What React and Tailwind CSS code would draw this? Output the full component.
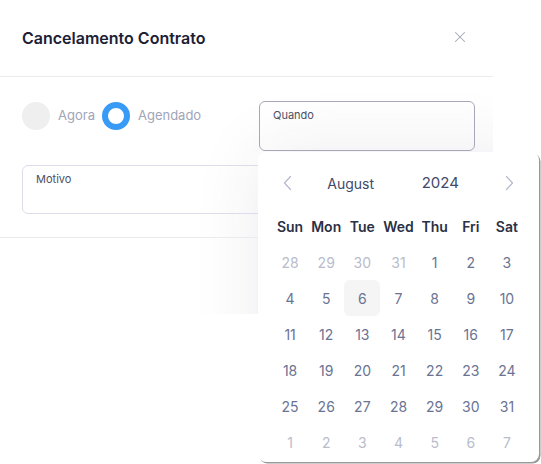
import { X } from 'lucide-react'

const WEEKDAYS = ['Sun', 'Mon', 'Tue', 'Wed', 'Thu', 'Fri', 'Sat']

// August 2024 grid, with the trailing/leading days of July and September
const DAYS = [
  [28, 29, 30, 31].map((d) => ({ d, out: true })),
  ...Array.from({ length: 31 }, (_, i) => ({ d: i + 1, out: false })),
  [1, 2, 3, 4, 5, 6, 7].map((d) => ({ d, out: true })),
].flat()

function Chevron({ dir }) {
  return (
    <svg width="9" height="16" viewBox="0 0 9 16" fill="none">
      <path
        d={dir === 'left' ? 'M7.5 1.5 1.5 8l6 6.5' : 'M1.5 1.5 7.5 8l-6 6.5'}
        stroke="#b4b8cc"
        strokeWidth="1.2"
        strokeLinecap="round"
        strokeLinejoin="round"
      />
    </svg>
  )
}

function Calendar() {
  return (
    <div className="absolute left-[258px] top-[152px] h-[310px] w-[281px] rounded-lg bg-white px-[14px] pt-[20px] shadow-[1.5px_1.5px_0.5px_0_rgba(0,0,0,0.4)]">
      <div className="flex h-[22px] items-center text-[14px] text-[#414a6a]">
        <div className="flex w-[32px] justify-center">
          <Chevron dir="left" />
        </div>
        <div className="w-[94px] text-center">August</div>
        <div className="w-[86px] text-center text-[15px]">2024</div>
        <div className="w-[10px]" />
        <div className="flex w-[32px] justify-center">
          <Chevron dir="right" />
        </div>
      </div>
      <div className="mt-[14px] grid grid-cols-7">
        {WEEKDAYS.map((w) => (
          <div
            key={w}
            className="flex h-[36px] items-center justify-center text-[14px] font-semibold text-[#2b3145]"
          >
            {w}
          </div>
        ))}
        {DAYS.map((day, i) => (
          <div
            key={i}
            className={`flex h-[36px] items-center justify-center rounded-md text-[14px] ${
              day.out ? 'text-[#b9bccb]' : 'text-[#6b7393]'
            } ${!day.out && day.d === 6 ? 'bg-[#f5f5f6]' : ''}`}
          >
            {day.d}
          </div>
        ))}
      </div>
    </div>
  )
}

export default function App() {
  return (
    <div className="relative h-[464px] w-[541px] overflow-hidden bg-white font-['Inter',sans-serif]">
      <div className="relative h-[314px] w-[493px] overflow-hidden bg-white">
        {/* popover shadow, clipped by the dialog */}
        <div className="absolute left-[258px] top-[152px] h-[311px] w-[282px] rounded-lg shadow-[0_0_70px_rgba(40,40,80,0.09)]" />

        <div className="relative flex h-[77px] items-center justify-between border-b border-[#ebebef] pl-[22px] pr-[24px]">
          <h2 className="text-[16px] font-semibold text-[#1b2035]">Cancelamento Contrato</h2>
          <X size={18} strokeWidth={1.4} className="-mt-[2px] text-[#a3a8b8]" />
        </div>

        <div className="relative border-b border-[#ebebef] px-[22px] pb-[23px] pt-[24px]">
          <div className="flex items-start">
            <div className="mt-px flex w-[237px] shrink-0 items-center">
              <span className="h-[28px] w-[28px] rounded-full bg-[#efefef]" />
              <span className="ml-[8px] text-[13px] text-[#a1a5b9]">Agora</span>
              <span className="ml-[7px] h-[28px] w-[28px] rounded-full border-[6px] border-[#389bf5] bg-white" />
              <span className="ml-[8px] text-[13px] text-[#a1a5b9]">Agendado</span>
            </div>
            <div className="h-[50px] w-[216px] shrink-0 rounded-md border border-[#a6a8b8] px-[13px] pt-[5px] text-[11px] text-[#4b5066]">
              Quando
            </div>
          </div>
          <div className="mt-[14px] h-[49px] w-[449px] rounded-md border border-[#dcdcea] px-[13px] pt-[5px] text-[11px] text-[#4b5066]">
            Motivo
          </div>
        </div>
      </div>

      <Calendar />
    </div>
  )
}
